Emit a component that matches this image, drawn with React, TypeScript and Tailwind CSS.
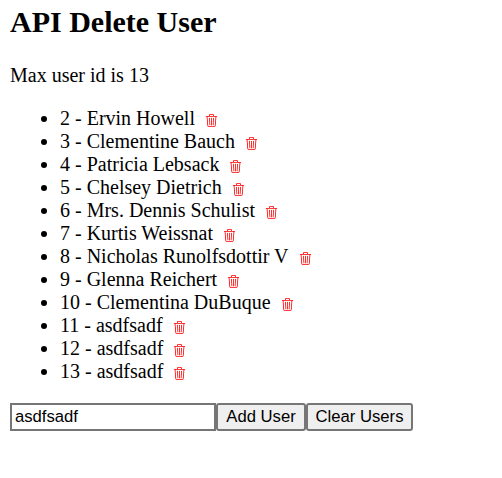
import { FaTrash } from "react-icons/fa";
import { BsTrash3 } from "react-icons/bs";

const users = [
  [2, "Ervin Howell"],
  [3, "Clementine Bauch"],
  [4, "Patricia Lebsack"],
  [5, "Chelsey Dietrich"],
  [6, "Mrs. Dennis Schulist"],
  [7, "Kurtis Weissnat"],
  [8, "Nicholas Runolfsdottir V"],
  [9, "Glenna Reichert"],
  [10, "Clementina DuBuque"],
  [11, "asdfsadf"],
  [12, "asdfsadf"],
  [13, "asdfsadf"],
] as const;

export default function App() {
  return (
    <main className="min-h-screen bg-white pl-[10px] pt-[5px] text-black font-['Liberation_Serif',serif] text-[20px] leading-[23px]">
      <h2 className="text-[30px] font-bold leading-[34px]">API Delete User</h2>
      <p className="mt-[25px]">Max user id is 13</p>
      <ul className="mt-[20px] list-disc pl-[50px]">
        {users.map(([id, name]) => (
          <li key={id} className="h-[23px] whitespace-nowrap">
            {id} - {name}
            <BsTrash3 className="ml-[10px] inline-block h-[13px] w-[13px] align-[-2px] text-[#ff0000]" />
          </li>
        ))}
      </ul>
      <form className="mt-[20px] flex h-[28px] font-['Liberation_Sans',sans-serif] text-[16.67px] leading-[20px]">
        <input
          className="h-[28px] w-[206px] border-2 border-[#767676] bg-white px-[3px]"
          defaultValue="asdfsadf"
        />
        <button type="button" className="w-[90px] rounded-[3px] border-2 border-[#767676] bg-[#efefef]">Add User</button>
        <button type="button" className="w-[107px] rounded-[3px] border-2 border-[#767676] bg-[#efefef]">Clear Users</button>
      </form>
    </main>
  );
}
